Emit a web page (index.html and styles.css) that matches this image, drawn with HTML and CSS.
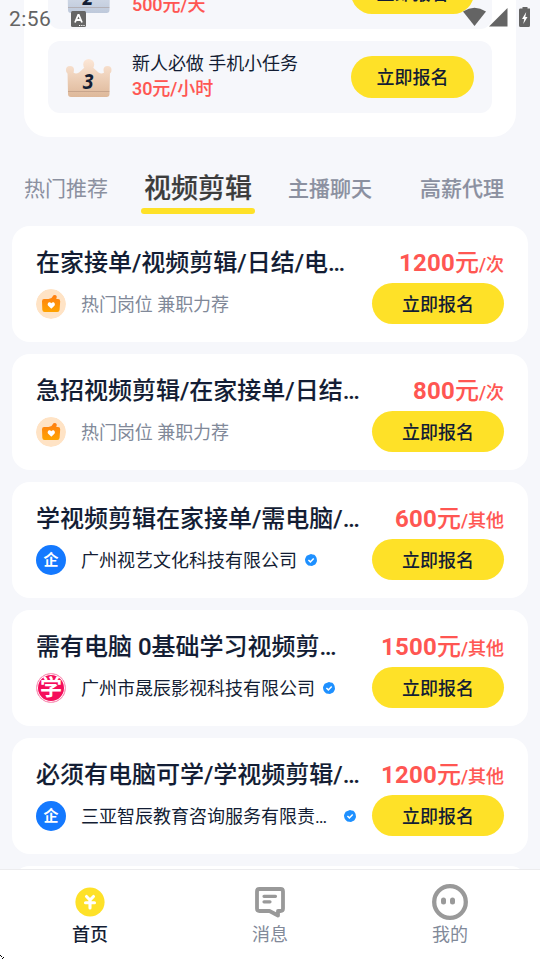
FILE: index.html
```html
<!DOCTYPE html>
<html lang="zh-CN">
<head>
<meta charset="utf-8">
<title>兼职</title>
<link rel="stylesheet" href="styles.css">
</head>
<body>
<svg width="0" height="0" class="defs">
  <defs>
    <linearGradient id="silver" gradientUnits="userSpaceOnUse" x1="0" y1="0" x2="0" y2="40"><stop offset="0" stop-color="#e9eef7"/><stop offset="1" stop-color="#bdc8da"/></linearGradient>
    <linearGradient id="bronze" gradientUnits="userSpaceOnUse" x1="0" y1="0" x2="0" y2="40"><stop offset="0" stop-color="#fde8d8"/><stop offset="1" stop-color="#ddb798"/></linearGradient>
    <linearGradient id="orange" x1="0" y1="0" x2="0" y2="1"><stop offset="0" stop-color="#ff7d12"/><stop offset="1" stop-color="#ffa400"/></linearGradient>
    <symbol id="crown" viewBox="0 0 46 40">
      <circle cx="4" cy="12" r="4"/><circle cx="41.500" cy="12" r="4"/><circle cx="22.700" cy="6.500" r="5.500"/>
      <path d="M1.500 14L6.500 13.500Q9 17 13 14.500L18.500 9.500H27L32.500 14.500Q36.500 17 39 13.500L44 14L43.500 36Q43.500 39 40.500 39H5Q2 39 2 36Z"/>
      <path d="M2 33.500H43.500" stroke="#8a6a58" stroke-opacity=".3" stroke-width="1"/>
    </symbol>
    <symbol id="hot" viewBox="0 0 30 30">
      <circle cx="15" cy="15" r="15" fill="#ffe3c5"/>
      <path d="M8 10H12.500L15.500 9L17.500 6.300Q20.400 5.200 20.800 7.800L20.300 10H22Q24.200 10 24.200 12.200L23.600 20.800Q23.400 23 21.300 23H8.500Q6.500 23 6.300 20.800L6 12.200Q6 10 8 10Z" fill="url(#orange)"/>
      <path d="M15.300 19.700L12.200 16.800C10.500 14.700 13.300 11.800 15.300 14.300C17.300 11.800 20.100 14.700 18.400 16.800Z" fill="#fff"/>
    </symbol>
    <symbol id="verified" viewBox="0 0 12 12">
      <path d="M6 0L7.600.400L9.300.700L10.500 2.100L11.500 3.700L11.800 5.500L12 7L11.300 8.700L10.200 10.400L8.500 11.200L7 12L5.200 11.800L3.300 11.400L1.900 10.200L.700 8.800L.200 7L0 5.200L.700 3.500L1.700 1.800L3.500.900Z" fill="#1e90ff"/>
      <path d="M3.400 6L5.400 7.900L8.700 4.500" fill="none" stroke="#fff" stroke-width="1.500"/>
    </symbol>
  </defs>
</svg>
<div class="screen">
  <div class="status">
    <span class="time">2:56</span>
    <svg class="ime" viewBox="0 0 15 16"><rect width="15" height="16" rx="1.500" fill="#666"/><path d="M4 11.500L7.200 4H7.800L11 11.500M5.200 9H9.800" fill="none" stroke="#fff" stroke-width="1.800"/><path d="M8 14.500H14" stroke="#fff" stroke-width="1.200" stroke-dasharray="1.200 1"/></svg>
    <svg class="signals" viewBox="0 0 70 20" fill="#646464"><path d="M0 4.500Q11.500 -2.800 23 4.500L11.500 19Z"/><path d="M26 19.500H44.500V1Z"/><path d="M57 1.500H59.500V0H64.500V1.500H67V18.500Q67 20 65.500 20H57.500Q56 20 56 18.500V3Q56 1.500 57 1.500Z"/><path d="M63.200 5L59 12H61.200L60.300 17L64.500 10H62.300Z" fill="#fff"/></svg>
  </div>
  <main class="content">
    <section class="ranks">
      <article class="rank">
        <div class="medal"><svg fill="url(#silver)"><use href="#crown"/></svg><b>2</b></div>
        <div class="rank-text second"><p class="pay">500元/天</p></div>
        <button class="apply">立即报名</button>
      </article>
      <article class="rank">
        <div class="medal"><svg fill="url(#bronze)"><use href="#crown"/></svg><b>3</b></div>
        <div class="rank-text"><p>新人必做 手机小任务</p><p class="pay">30元/小时</p></div>
        <button class="apply">立即报名</button>
      </article>
    </section>
    <nav class="tabs">
      <span class="light">热门推荐</span><span class="active">视频剪辑</span><span>主播聊天</span><span>高薪代理</span>
    </nav>
    <section class="jobs">
      <article class="job">
        <div class="line"><h2>在家接单/视频剪辑/日结/电…</h2><p class="price"><b>1200</b>元<small>/次</small></p></div>
        <div class="line sub"><svg class="avatar"><use href="#hot"/></svg><span class="company muted">热门岗位 兼职力荐</span><button class="apply">立即报名</button></div>
      </article>
      <article class="job">
        <div class="line"><h2>急招视频剪辑/在家接单/日结…</h2><p class="price"><b>800</b>元<small>/次</small></p></div>
        <div class="line sub"><svg class="avatar"><use href="#hot"/></svg><span class="company muted">热门岗位 兼职力荐</span><button class="apply">立即报名</button></div>
      </article>
      <article class="job">
        <div class="line"><h2>学视频剪辑在家接单/需电脑/…</h2><p class="price"><b>600</b>元<small>/其他</small></p></div>
        <div class="line sub"><span class="avatar blue">企</span><span class="company">广州视艺文化科技有限公司</span><svg class="check"><use href="#verified"/></svg><button class="apply">立即报名</button></div>
      </article>
      <article class="job">
        <div class="line"><h2>需有电脑 0基础学习视频剪…</h2><p class="price"><b>1500</b>元<small>/其他</small></p></div>
        <div class="line sub"><span class="avatar pink">学</span><span class="company">广州市晟辰影视科技有限公司</span><svg class="check"><use href="#verified"/></svg><button class="apply">立即报名</button></div>
      </article>
      <article class="job">
        <div class="line"><h2>必须有电脑可学/学视频剪辑/…</h2><p class="price"><b>1200</b>元<small>/其他</small></p></div>
        <div class="line sub"><span class="avatar blue">企</span><span class="company wide">三亚智辰教育咨询服务有限责…</span><svg class="check"><use href="#verified"/></svg><button class="apply">立即报名</button></div>
      </article>
      <article class="job"></article>
    </section>
  </main>
  <footer class="bar">
    <div class="item on">
      <svg viewBox="0 0 36 36"><circle cx="18" cy="18" r="14.600" fill="#fee128"/><path d="M14.500 12.500L18 16L21.500 12.500M13.500 18.700H22.500M18 16.500V24" fill="none" stroke="#fff" stroke-width="3.100" stroke-linecap="round"/></svg>
      <span>首页</span>
    </div>
    <div class="item">
      <svg viewBox="0 0 36 36" fill="none" stroke="#999" stroke-width="3.800"><path d="M7.500 5H28.500Q31 5 31 7.500V24.500Q31 27 28.500 27H26V31.500L17.500 27H7.500Q5 27 5 24.500V7.500Q5 5 7.500 5Z" stroke-linejoin="round"/><path d="M12 12.300H23.500M12 17.800H18" stroke-linecap="round" stroke-width="3.200"/></svg>
      <span>消息</span>
    </div>
    <div class="item">
      <svg viewBox="0 0 36 36"><circle cx="18" cy="18" r="15.800" fill="none" stroke="#999" stroke-width="4.300"/><rect x="9" y="13.500" width="5" height="7" rx="2.500" fill="#999"/><rect x="18" y="13.500" width="5" height="7" rx="2.500" fill="#999"/></svg>
      <span>我的</span>
    </div>
    <svg class="corner" viewBox="0 0 5 5"><path d="M0 0H1V1H0ZM1 1H2V2H1ZM3 2H4V3H3ZM2 3H3V4H2Z"/></svg>
  </footer>
</div>
</body>
</html>
```
FILE: styles.css
```css
* { box-sizing: border-box; margin: 0; padding: 0; }
body { background: #f6f7fb; font-family: Roboto, "Noto Sans CJK SC", sans-serif; color: #131d34; }
svg { display: block; }
.defs { position: absolute; }
.screen { position: relative; width: 540px; height: 960px; overflow: hidden; display: flex; flex-direction: column; background: #f6f7fb; }
.status { position: absolute; z-index: 2; top: 0; left: 0; width: 540px; height: 37px; padding: 0 10px 0 9px; display: flex; align-items: center; color: #646464; }
.time { font-size: 21px; line-height: 37px; letter-spacing: .4px; margin-top: 2px; }
.ime { width: 15px; height: 16px; margin-left: 20px; }
.signals { width: 70px; height: 20px; margin-left: auto; margin-right: -3px; margin-top: -3px; }
.content { flex: 1; min-height: 0; overflow: hidden; }
.ranks { margin: -67px 24px 0; padding: 24px; height: 204px; display: flex; flex-direction: column; gap: 12px; background: #fff; border-radius: 24px; }
.rank { flex: none; height: 72px; border-radius: 12px; background: #f6f7fb; display: flex; align-items: center; padding: 0 18px; }
.medal { width: 46px; height: 40px; margin-top: 2px; position: relative; }
.medal svg { width: 46px; height: 40px; }
.medal b { position: absolute; left: 0; right: 2px; top: 11px; text-align: center; font: italic 700 21px/24px "Open Sans", sans-serif; transform: scaleX(.92); }
.rank-text { margin-left: 20px; margin-top: -2px; font-size: 18px; line-height: 25px; letter-spacing: -.05px; }
.rank-text p { white-space: nowrap; }
.rank-text.second { padding-top: 25px; }
.rank-text .pay { font-weight: 500; color: #ff5652; -webkit-text-stroke: .1px; }
.apply { flex: none; width: 132px; height: 41px; margin-left: auto; border: 0; border-radius: 21px; background: #fee128; font: 500 18px/41px Roboto, "Noto Sans CJK SC", sans-serif; color: #131d34; padding-top: 1px; }
.rank .apply { width: 123px; height: 42px; padding-top: 0; }
.tabs { height: 89px; padding: 10px 35px 0 24px; display: flex; align-items: center; font-size: 21px; font-weight: 500; color: #8b90a0; white-space: nowrap; -webkit-text-stroke: .15px; }
.tabs .light { font-weight: 400; -webkit-text-stroke: 0; }
.tabs .active { position: relative; font-size: 27px; color: #3c3c3c; margin: 0 36px 0 36px; -webkit-text-stroke: .2px; }
.tabs .active::after { content: ""; position: absolute; left: -3px; bottom: -8px; width: 114px; height: 6px; border-radius: 3px; background: #fee128; }
.tabs span:last-child { margin-left: 48px; }
.jobs { display: flex; flex-direction: column; gap: 12px; padding: 0 12px; }
.job { height: 116px; flex: none; padding: 19px 24px 0; border-radius: 18px; background: #fff; }
.line { display: flex; align-items: center; justify-content: space-between; height: 36px; white-space: nowrap; }
.line h2 { font-size: 24px; font-weight: 500; line-height: 36px; -webkit-text-stroke: .1px; }
.price { color: #ff5652; font-size: 24px; font-weight: 500; line-height: 36px; padding-top: 1px; -webkit-text-stroke: .1px; }
.price b { font-weight: 700; letter-spacing: .2px; -webkit-text-stroke: 0; }
.price small { font-size: 18px; }
.line.sub { height: 41px; margin-top: 2px; justify-content: flex-start; }
.avatar { width: 30px; height: 30px; flex: none; border-radius: 50%; }
span.avatar { display: flex; align-items: center; justify-content: center; }
.blue { background: #1479ff; color: #fff; font-size: 15px; font-weight: 700; line-height: 30px; }
.pink { background: #f50d5b; color: #fff; font-size: 22px; font-weight: 700; line-height: 28px; border: 1px solid #f9a4c2; box-shadow: inset 0 0 0 1px #fff; padding-top: 1px; }
.company { margin-left: 15px; margin-top: 2px; font-size: 18px; line-height: 27px; }
.muted { color: #818999; letter-spacing: -.05px; }
.check { width: 12px; height: 12px; margin-left: 7.5px; margin-top: 1px; }
.wide + .check { margin-left: 16.5px; }
.bar { position: relative; height: 91px; flex: none; display: flex; background: #fff; border-top: 1px solid #ececee; }
.item { flex: 1; padding-top: 14px; display: flex; flex-direction: column; align-items: center; font-size: 18px; line-height: 27px; color: #818999; }
.item svg { width: 36px; height: 36px; margin-bottom: 1px; }
.on { color: #131d34; font-weight: 500; }
.item .corner, .corner { position: absolute; left: 0; bottom: 0; width: 5px; height: 5px; }
```
